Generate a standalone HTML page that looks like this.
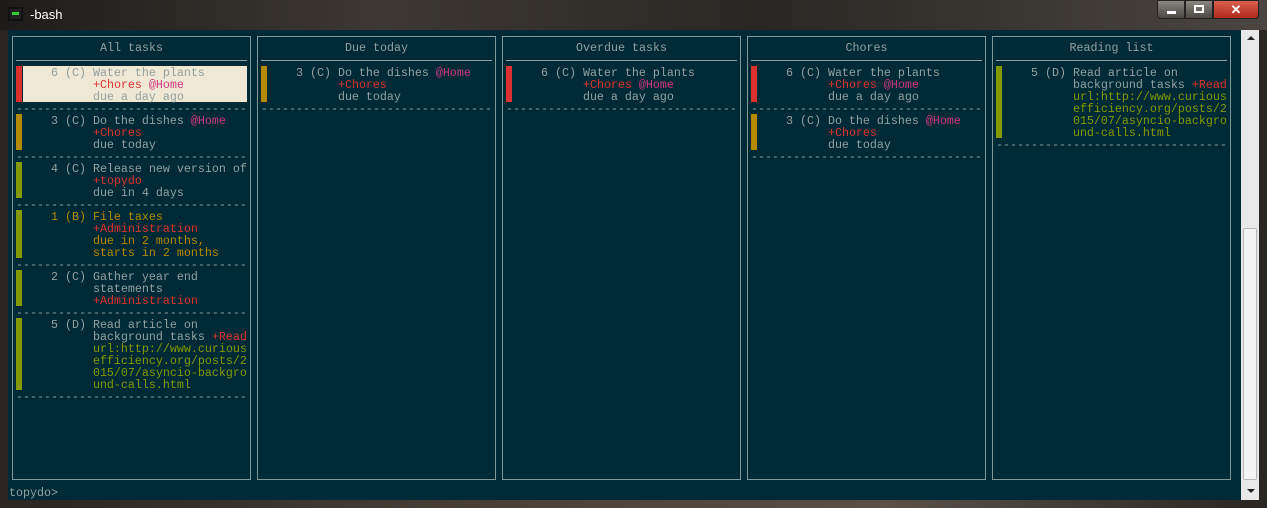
<!DOCTYPE html>
<html><head><meta charset="utf-8"><style>
*{margin:0;padding:0}
body{width:1267px;height:508px;overflow:hidden;position:relative;background:#3a3530;font-family:"Liberation Mono",monospace}
.chrome{position:absolute;left:0;top:0;width:1267px;height:508px;background:linear-gradient(90deg,#2a2520 0%,#4a4038 40%,#5a5048 70%,#2a2622 100%)}
.tb{position:absolute;left:0;top:0;width:1267px;height:30px;background:linear-gradient(90deg,#1e1c1a,#3d3833 30%,#2a2724 60%,#4a4540 100%)}
.term{position:absolute;left:8px;top:30px;width:1233px;height:470px;background:#002b36}
.sb{position:absolute;left:1241px;top:30px;width:18px;height:470px;background:#e8e8e8}
.thumb{position:absolute;left:1243px;top:228px;width:14px;height:252px;background:#f4f4f4;border:1px solid #b8b8b8;box-sizing:border-box;border-radius:2px}
.box{position:absolute;top:36px;width:239px;height:444px;border:1px solid #7f9a98;box-sizing:border-box}
.ttl{position:absolute;top:42px;width:239px;text-align:center;color:#93a1a1;font-size:11.67px;line-height:12px}
.rule{position:absolute;top:60px;width:231px;height:1px;background:#93a1a1}
pre{position:absolute;top:67px;font-family:"Liberation Mono",monospace;font-size:11.67px;line-height:12px;color:#93a1a1;white-space:pre}
.bar{position:absolute;width:6px}
.r{color:#dc322f}.m{color:#d33682}.g{color:#859900}.y{color:#b58900}
</style></head><body>
<div class="chrome"></div>
<div class="tb"></div>
<div style="position:absolute;left:8px;top:7px;width:15px;height:14px;border:2px solid #111;background:#222;box-sizing:border-box"><div style="position:absolute;left:2px;top:3px;width:7px;height:3px;background:#3c3"></div></div>
<div style="position:absolute;left:30px;top:7px;font:13px 'Liberation Sans',sans-serif;color:#fff">-bash</div>
<div style="position:absolute;left:1157px;top:0;width:28px;height:19px;background:linear-gradient(#8a8680,#4a4642);border:1px solid #222;box-sizing:border-box;border-radius:0 0 0 4px"><div style="position:absolute;left:9px;top:10px;width:9px;height:3px;background:#fff"></div></div>
<div style="position:absolute;left:1185px;top:0;width:28px;height:19px;background:linear-gradient(#8a8680,#4a4642);border:1px solid #222;box-sizing:border-box"><div style="position:absolute;left:8px;top:4px;width:10px;height:8px;border:2px solid #fff;box-sizing:border-box"></div></div>
<div style="position:absolute;left:1213px;top:0;width:46px;height:19px;background:linear-gradient(#d86050,#b02a1c);border:1px solid #222;box-sizing:border-box;border-radius:0 0 4px 0;color:#fff;font:bold 13px 'Liberation Sans',sans-serif;text-align:center;line-height:17px">✕</div>
<div class="term"></div>
<div class="sb"></div><div class="thumb"></div>
<div style="position:absolute;left:1247px;top:36px;width:0;height:0;border-left:4px solid transparent;border-right:4px solid transparent;border-bottom:4px solid #222"></div>
<div style="position:absolute;left:1247px;top:489px;width:0;height:0;border-left:4px solid transparent;border-right:4px solid transparent;border-top:4px solid #222"></div>

<!-- col1 -->
<div class="box" style="left:12px"></div><div class="ttl" style="left:12px">All tasks</div><div class="rule" style="left:16px"></div>
<div style="position:absolute;left:23px;top:66px;width:224px;height:36px;background:#eee8d5"></div>
<div class="bar" style="left:16px;top:66px;height:36px;background:#dc322f"></div>
<div class="bar" style="left:16px;top:114px;height:36px;background:#b58900"></div>
<div class="bar" style="left:16px;top:162px;height:36px;background:#859900"></div>
<div class="bar" style="left:16px;top:210px;height:48px;background:#859900"></div>
<div class="bar" style="left:16px;top:270px;height:36px;background:#859900"></div>
<div class="bar" style="left:16px;top:318px;height:72px;background:#859900"></div>
<pre style="left:16px">     6 (C) Water the plants
           <span class="r">+Chores</span> <span class="m">@Home</span>
           due a day ago
---------------------------------
     3 (C) Do the dishes <span class="m">@Home</span>
           <span class="r">+Chores</span>
           due today
---------------------------------
     4 (C) Release new version of
           <span class="r">+topydo</span>
           due in 4 days
---------------------------------
<span class="y">     1 (B) File taxes</span>
           <span class="r">+Administration</span>
<span class="y">           due in 2 months,
           starts in 2 months</span>
---------------------------------
     2 (C) Gather year end
           statements
           <span class="r">+Administration</span>
---------------------------------
     5 (D) Read article on
           background tasks <span class="r">+Read</span>
<span class="g">           url:http://www.curious
           efficiency.org/posts/2
           015/07/asyncio-backgro
           und-calls.html</span>
---------------------------------</pre>

<!-- col2 -->
<div class="box" style="left:257px"></div><div class="ttl" style="left:257px">Due today</div><div class="rule" style="left:261px"></div>
<div class="bar" style="left:261px;top:66px;height:36px;background:#b58900"></div>
<pre style="left:261px">     3 (C) Do the dishes <span class="m">@Home</span>
           <span class="r">+Chores</span>
           due today
---------------------------------</pre>

<!-- col3 -->
<div class="box" style="left:502px"></div><div class="ttl" style="left:502px">Overdue tasks</div><div class="rule" style="left:506px"></div>
<div class="bar" style="left:506px;top:66px;height:36px;background:#dc322f"></div>
<pre style="left:506px">     6 (C) Water the plants
           <span class="r">+Chores</span> <span class="m">@Home</span>
           due a day ago
---------------------------------</pre>

<!-- col4 -->
<div class="box" style="left:747px"></div><div class="ttl" style="left:747px">Chores</div><div class="rule" style="left:751px"></div>
<div class="bar" style="left:751px;top:66px;height:36px;background:#dc322f"></div>
<div class="bar" style="left:751px;top:114px;height:36px;background:#b58900"></div>
<pre style="left:751px">     6 (C) Water the plants
           <span class="r">+Chores</span> <span class="m">@Home</span>
           due a day ago
---------------------------------
     3 (C) Do the dishes <span class="m">@Home</span>
           <span class="r">+Chores</span>
           due today
---------------------------------</pre>

<!-- col5 -->
<div class="box" style="left:992px"></div><div class="ttl" style="left:992px">Reading list</div><div class="rule" style="left:996px"></div>
<div class="bar" style="left:996px;top:66px;height:72px;background:#859900"></div>
<pre style="left:996px">     5 (D) Read article on
           background tasks <span class="r">+Read</span>
<span class="g">           url:http://www.curious
           efficiency.org/posts/2
           015/07/asyncio-backgro
           und-calls.html</span>
---------------------------------</pre>

<pre style="left:9px;top:487px">topydo&gt;</pre>
</body></html>
